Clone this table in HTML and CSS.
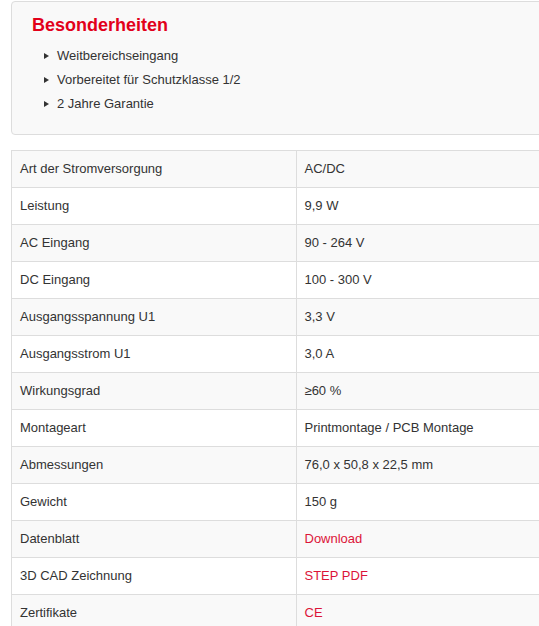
FILE: index.html
```html
<!DOCTYPE html>
<html lang="de">
<head>
<meta charset="utf-8">
<title>Produktdetails</title>
<link rel="stylesheet" href="styles.css">
</head>
<body>
<div class="page">
  <div class="features">
    <h3 class="features-title">Besonderheiten</h3>
    <ul class="features-list">
      <li>Weitbereichseingang</li>
      <li>Vorbereitet für Schutzklasse 1/2</li>
      <li>2 Jahre Garantie</li>
    </ul>
  </div>
  <table class="specs">
    <tbody>
      <tr><td>Art der Stromversorgung</td><td>AC/DC</td></tr>
      <tr><td>Leistung</td><td>9,9 W</td></tr>
      <tr><td>AC Eingang</td><td>90 - 264 V</td></tr>
      <tr><td>DC Eingang</td><td>100 - 300 V</td></tr>
      <tr><td>Ausgangsspannung U1</td><td>3,3 V</td></tr>
      <tr><td>Ausgangsstrom U1</td><td>3,0 A</td></tr>
      <tr><td>Wirkungsgrad</td><td>≥60 %</td></tr>
      <tr><td>Montageart</td><td>Printmontage / PCB Montage</td></tr>
      <tr><td>Abmessungen</td><td>76,0 x 50,8 x 22,5 mm</td></tr>
      <tr><td>Gewicht</td><td>150 g</td></tr>
      <tr><td>Datenblatt</td><td><a href="#" class="link">Download</a></td></tr>
      <tr><td>3D CAD Zeichnung</td><td><a href="#" class="link">STEP PDF</a></td></tr>
      <tr><td>Zertifikate</td><td><a href="#" class="link">CE</a></td></tr>
    </tbody>
  </table>
</div>
</body>
</html>
```
FILE: styles.css
```css
html, body {
  margin: 0;
  padding: 0;
  overflow: hidden;
  background: #fff;
}

body {
  font-family: "Liberation Sans", Arial, sans-serif;
  font-size: 13px;
  color: #333;
}

.page {
  padding: 1px 0 0 11px;
  width: 570px;
}

.features {
  background: #f9f9f9;
  border: 1px solid #ddd;
  border-radius: 4px;
  padding: 10px 20px 18px;
}

.features-title {
  margin: 0 0 6px;
  font-size: 18px;
  line-height: 26px;
  font-weight: bold;
  color: #e2001a;
}

.features-list {
  list-style: none;
  margin: 0;
  padding: 0 0 0 12px;
}

.features-list li {
  display: flex;
  align-items: center;
  gap: 8px;
  line-height: 24px;
}

.features-list li::before {
  content: "";
  width: 0;
  height: 0;
  border-left: 5px solid #333;
  border-top: 3.5px solid transparent;
  border-bottom: 3.5px solid transparent;
}

.specs {
  margin-top: 15px;
  width: 570px;
  border-collapse: collapse;
  table-layout: fixed;
  border: 1px solid #ddd;
}

.specs td {
  width: 50%;
  border: 1px solid #ddd;
  padding: 8px 8px;
  line-height: 20px;
  vertical-align: top;
}

.specs tr:nth-child(odd) td {
  background: #f9f9f9;
}

.link {
  color: #dc1438;
  text-decoration: none;
}
```
